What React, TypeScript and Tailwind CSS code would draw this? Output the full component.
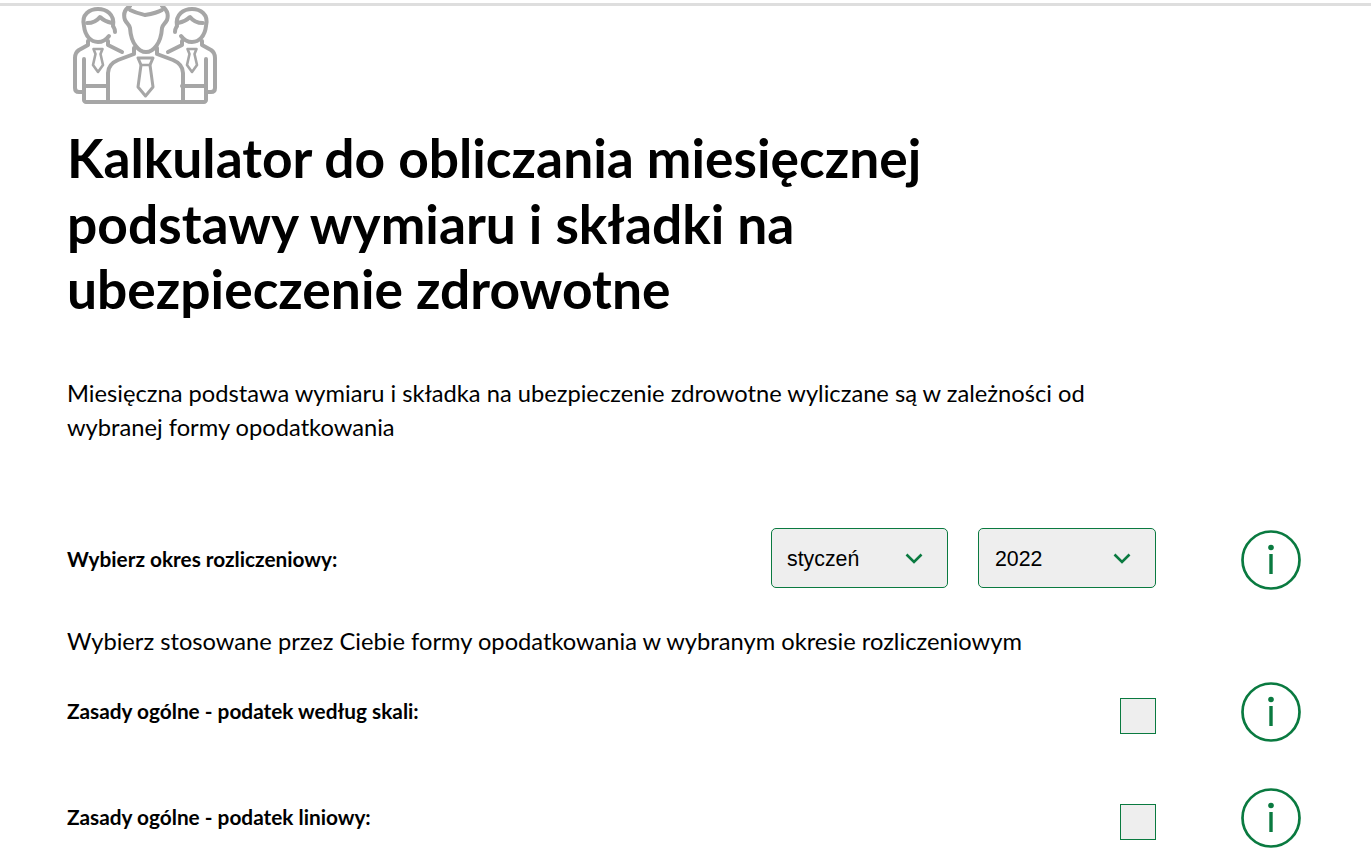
import React from 'react';

const green = '#0a7a40';

function PeopleIcon() {
  return (
    <svg width="150" height="100" viewBox="70 6 150 100" fill="none" stroke="#a6a6a6" strokeWidth="4" strokeLinejoin="round" strokeLinecap="round" className="block">
      {/* left man */}
      <path d="M115 32C115 28 114 28 113 26 115 14 106 9 98 9 90 9 81 14 84 26 85 36 91 42 98 42 102 42 106 40 109 36" />
      <path d="M87 23c5 0 10-2 13-6 3 3 7 5 12 6" />
      <path d="M88 41v4l-9 5c-3 2-4 4-4 8v30c0 3 2 4 4 4h5" />
      <path d="M108 41v4l14 7" />
      <path d="M84 59v41c0 1 1 2 2 2h118c1 0 2-1 2-2V59" />
      <path d="M84 86h24" />
      <path d="M93.500 49h9l-2 5 2.500 11-5 7-5-7 2.500-11z" strokeWidth="2.600" />
      {/* right man */}
      <path d="M175 32C175 28 176 28 177 26 175 14 184 9 192 9 200 9 209 14 206 26 205 36 199 42 192 42 188 42 184 40 181 36" />
      <path d="M203 23c-5 0-10-2-13-6-3 3-7 5-12 6" />
      <path d="M202 41v4l9 5c3 2 4 4 4 8v30c0 3-2 4-4 4h-5" />
      <path d="M182 41v4l-14 7" />
      <path d="M206 86h-24" />
      <path d="M187.500 49h9l-2 5 2.500 11-5 7-5-7 2.500-11z" strokeWidth="2.600" />
      {/* center man */}
      <path d="M130 6c-5 3-7 8-5 14 2 4 4 4 5 8C131 44 139 52 146 52 153 52 161 44 162 28c1-4 3-4 5-8 2-6-1-11-5-14" />
      <path d="M130 10c6 3 11 4 15 5 6-1 12-2 17-5" />
      <path d="M134 48v6l-16 6c-7 3-10 7-10 13v29" />
      <path d="M157 48v6l16 6c7 3 10 7 10 13v29" />
      <path d="M138 58h15l-3 7 3 22-7.500 9-7.500-9 3-22z" strokeWidth="3" />
      <path d="M141 65h9" strokeWidth="2.600" />
    </svg>
  );
}

function InfoIcon() {
  return (
    <svg width="60" height="60" viewBox="0 0 60 60" fill="none" className="block">
      <circle cx="30" cy="30" r="28.500" stroke={green} strokeWidth="2.700" />
      <circle cx="30" cy="17.500" r="2.800" fill={green} />
      <rect x="28.300" y="24" width="3.400" height="20" fill={green} />
    </svg>
  );
}

function Select({ value, width, pad }: { value: string; width: string; pad: string }) {
  return (
    <div className={`flex h-[60px] items-center justify-between rounded-[5px] border border-[#0a7a40] bg-[#eeeeee] pr-[24px] font-['Liberation_Sans',sans-serif] text-[21.33px] text-black ${pad} ${width}`}>
      <span className="pt-[5px]">{value}</span>
      <svg width="18" height="12" viewBox="0 0 18 12" fill="none" stroke={green} strokeWidth="2.600" className="mt-[3px]">
        <path d="M1.500 1.500 9 9l7.500-7.500" />
      </svg>
    </div>
  );
}

function CheckRow({ label, mb }: { label: string; mb: string }) {
  return (
    <div className={`flex items-start ${mb}`}>
      <span className="mt-[16px] flex-1 text-[20.8px] leading-[26px] font-bold text-black">{label}</span>
      <div className="mt-[16px] h-[36px] w-[36px] border border-[#0a7a40] bg-[#eeeeee]" />
      <div className="ml-[85px]">
        <InfoIcon />
      </div>
    </div>
  );
}

export default function App() {
  return (
    <div className="h-[865px] overflow-hidden bg-white font-['Lato',sans-serif]">
      <div className="mt-[3px] h-[3px] bg-[#dedede]" />
      <main className="pl-[67px] pr-[70px]">
        <div className="pl-[3px]">
          <PeopleIcon />
        </div>
        <h1 className="mt-[19px] w-[900px] text-[53.33px] leading-[65.5px] font-bold text-black">
          Kalkulator do obliczania miesięcznej podstawy wymiaru i składki na ubezpieczenie zdrowotne
        </h1>
        <p className="mt-[54px] w-[1040px] text-[23.7px] leading-[34px] text-black">
          Miesięczna podstawa wymiaru i składka na ubezpieczenie zdrowotne wyliczane są w zależności od wybranej formy opodatkowania
        </p>
        <div className="mt-[84px] flex items-start">
          <span className="flex-1 self-center text-[20.8px] font-bold text-black">Wybierz okres rozliczeniowy:</span>
          <Select value="styczeń" width="w-[177px]" pad="pl-[15px]" />
          <div className="ml-[30px]">
            <Select value="2022" width="w-[178px]" pad="pl-[16px]" />
          </div>
          <div className="ml-[85px] mt-[2px]">
            <InfoIcon />
          </div>
        </div>
        <p className="mt-[34px] text-[23.7px] leading-[34px] text-black">
          Wybierz stosowane przez Ciebie formy opodatkowania w wybranym okresie rozliczeniowym
        </p>
        <div className="mt-[24px]">
          <CheckRow label="Zasady ogólne - podatek według skali:" mb="mb-[46px]" />
          <CheckRow label="Zasady ogólne - podatek liniowy:" mb="" />
        </div>
      </main>
    </div>
  );
}
